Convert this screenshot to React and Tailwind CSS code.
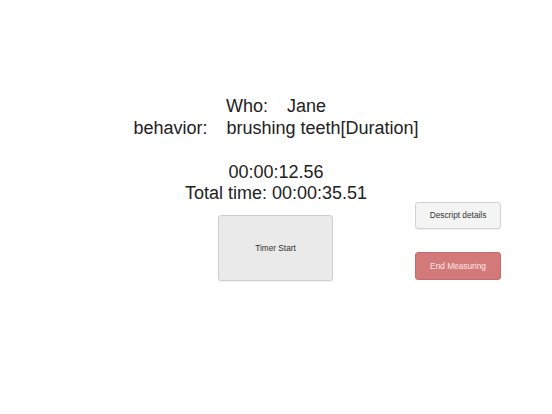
import React from "react";

// measuring screen: who / behavior, timers, buttons
const App = () => {
  return (
    <div className="w-[552px] h-[414px] bg-white text-[#222] font-['Liberation_Sans',Arial,sans-serif]">
      <div className="pt-[95px] flex flex-col items-center text-[18px] leading-[22px]">
        <div className="flex gap-[19px]">
          <span>Who:</span>
          <span>Jane</span>
        </div>
        <div className="flex gap-[19px]">
          <span>behavior:</span>
          <span>brushing teeth[Duration]</span>
        </div>
      </div>

      <div className="mt-[23px] flex flex-col items-center text-[18px] leading-[21px]">
        <div>00:00:12.56</div>
        <div>Total time: 00:00:35.51</div>
      </div>

      <div className="mt-[-2px] grid grid-cols-[218px_115px_1fr]">
        <div></div>
        <div className="pt-[13px]">
          <button className="w-[115px] h-[66px] bg-[#eaeaea] border border-[#cfcfcf] rounded-[3px] shadow-[0_1px_1px_rgba(0,0,0,0.06)] text-[8.3px] text-[#333]">
            Timer Start
          </button>
        </div>
        <div className="pl-[82px] flex flex-col gap-[23px]">
          <button className="w-[86px] h-[27px] bg-[#f4f4f4] border border-[#d2d2d2] rounded-[3px] shadow-[0_1px_1px_rgba(0,0,0,0.06)] text-[8.3px] text-[#333]">
            Descript details
          </button>
          <button className="w-[86px] h-[28px] bg-[#d47979] border border-[#c86a6a] rounded-[3px] text-[8.3px] text-[#fbe8e8]">
            End Measuring
          </button>
        </div>
      </div>
    </div>
  );
};

export default App;
